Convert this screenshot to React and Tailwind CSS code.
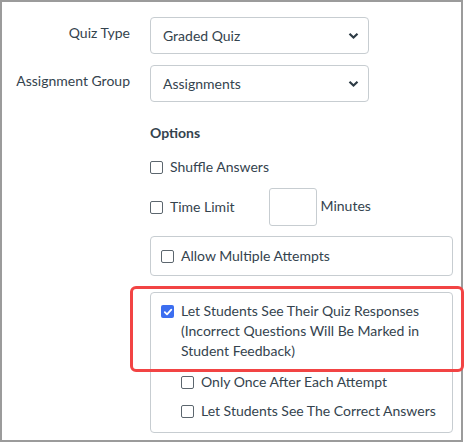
import { useState } from 'react'

function Box({ checked }) {
  if (checked) {
    return (
      <span className="flex h-[13px] w-[13px] shrink-0 items-center justify-center rounded-[2px] bg-[#3c6ef0]">
        <svg width="10" height="10" viewBox="0 0 10 10">
          <polyline points="1.8,5.2 4,7.4 8.3,2.6" fill="none" stroke="#fff" strokeWidth="1.8" strokeLinecap="round" strokeLinejoin="round" />
        </svg>
      </span>
    )
  }
  return <span className="block h-[13px] w-[13px] shrink-0 rounded-[2px] border border-[#5c666e] bg-white" />
}

function Check({ checked, children, className = '' }) {
  return (
    <div className={`flex items-start gap-[7px] ${className}`}>
      <span className="mt-[4px]"><Box checked={checked} /></span>
      <span>{children}</span>
    </div>
  )
}

function Select({ value }) {
  return (
    <div className="flex h-[37px] w-[219px] items-center justify-between rounded-[4px] border border-[#c7cdd1] bg-white pl-[12px] pr-[9px]">
      <span>{value}</span>
      <svg width="11" height="8" viewBox="0 0 11 8">
        <polyline points="1.5,1.8 5.5,5.6 9.5,1.8" fill="none" stroke="#2d3b45" strokeWidth="2.2" />
      </svg>
    </div>
  )
}

export default function App() {
  const [minutes] = useState('')

  return (
    <div className="relative h-[442px] w-[463px] border-2 border-[#9b9b9b] bg-white text-[14px] leading-[20px] text-[#34434e]" style={{ fontFamily: 'Lato, "Noto Sans", sans-serif' }}>
      <div className="flex flex-col pt-[15px]">
        {/* Quiz type */}
        <div className="flex">
          <div className="w-[128px] pt-[6px] text-right">Quiz Type</div>
          <div className="ml-[20px]"><Select value="Graded Quiz" /></div>
        </div>

        {/* Assignment group */}
        <div className="mt-[11px] flex">
          <div className="w-[128px] pt-[6px] text-right">Assignment Group</div>
          <div className="ml-[20px]"><Select value="Assignments" /></div>
        </div>

        {/* Options */}
        <div className="ml-[148px] mt-[21px] w-[303px]">
          <div className="font-bold">Options</div>

          <Check className="mt-[14px]">Shuffle Answers</Check>

          <div className="mt-[11px] flex items-center">
            <Check className="mt-[-1px]">Time Limit</Check>
            <div className="ml-[34px] h-[38px] w-[48px] rounded-[3px] border border-[#c7cdd1] bg-white">{minutes}</div>
            <span className="mb-[2px] ml-[4px]">Minutes</span>
          </div>

          <div className="mt-[10px] rounded-[4px] border border-[#c7cdd1] px-[10px] py-[9px]">
            <Check>Allow Multiple Attempts</Check>
          </div>

          <div className="mt-[16px] rounded-[4px] border border-[#c7cdd1] pb-[11px] pl-[10px] pr-[8px] pt-[8px]">
            <Check checked>
              Let Students See Their Quiz Responses (Incorrect Questions Will Be Marked in Student Feedback)
            </Check>
            <div className="ml-[20px] mt-[11px] flex flex-col gap-[9px]">
              <Check>Only Once After Each Attempt</Check>
              <Check>Let Students See The Correct Answers</Check>
            </div>
          </div>
        </div>
      </div>

      {/* highlight annotation */}
      <div className="pointer-events-none absolute left-[128px] top-[284px] h-[86px] w-[334px] rounded-[6px] border-[3px] border-[#f24444]" />
    </div>
  )
}
